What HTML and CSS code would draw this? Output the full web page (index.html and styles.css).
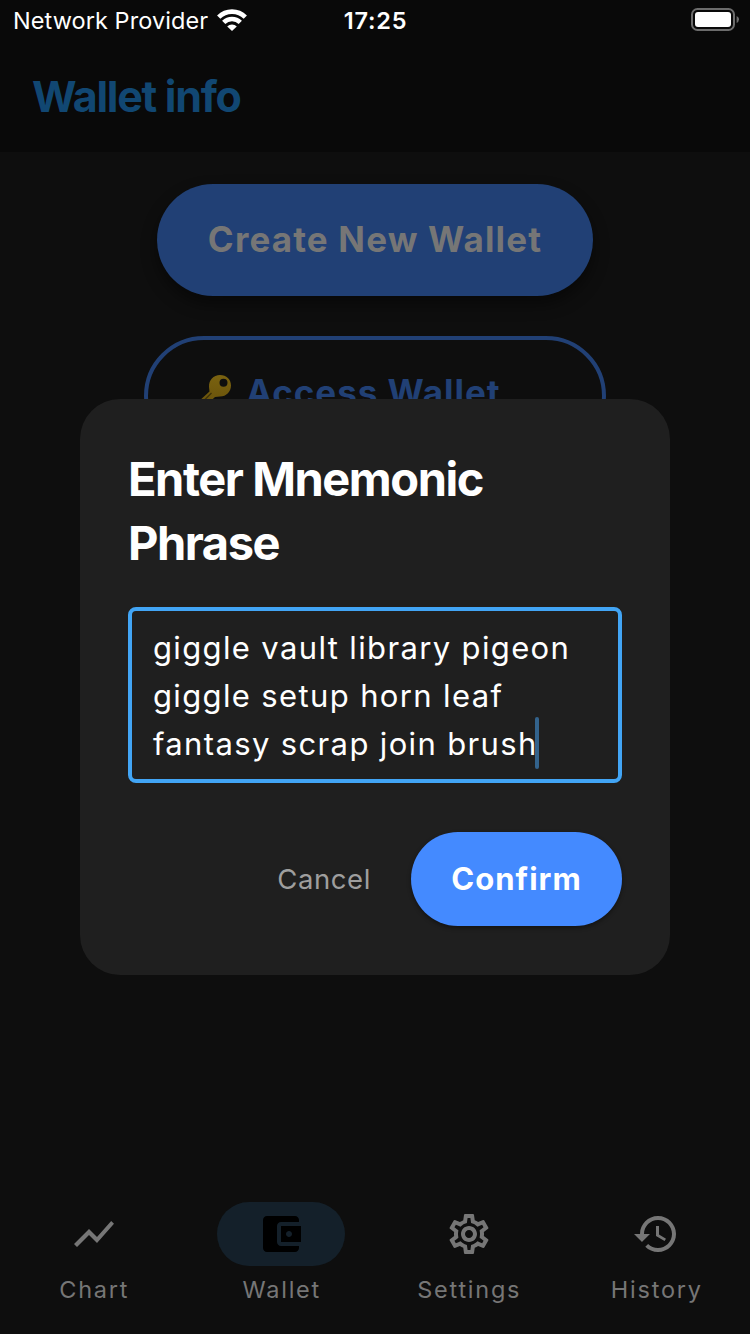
FILE: index.html
```html
<!DOCTYPE html>
<html lang="en">
<head>
<meta charset="utf-8">
<title>Wallet info</title>
<link rel="stylesheet" href="styles.css">
</head>
<body>
<div class="screen">
  <header class="header">
    <div class="status">
      <div class="carrier">
        <span class="carrier-name">Network Provider</span>
        <svg class="wifi" width="30" height="22" viewBox="0 0 30 22">
          <g fill="none" stroke="#fff" stroke-width="4.6">
            <path d="M1.700 8.100A18.800 18.800 0 0 1 28.300 8.100"/>
            <path d="M6.700 13.400A11.800 11.800 0 0 1 23.300 13.400"/>
          </g>
          <path fill="#fff" d="M15 22L10.200 17.500A6.800 6.800 0 0 1 19.800 17.500Z"/>
        </svg>
      </div>
      <span class="time">17:25</span>
      <svg class="battery" width="48" height="23" viewBox="0 0 48 23">
        <rect x="1" y="1" width="42" height="21" rx="5.5" fill="none" stroke="#6c6c6c" stroke-width="2"/>
        <rect x="4" y="4" width="36" height="15" rx="3" fill="#fff"/>
        <path d="M45.600 8Q48.200 9 48 11.500T45.600 15Z" fill="#6c6c6c"/>
      </svg>
    </div>
    <h1 class="title">Wallet info</h1>
  </header>

  <main class="content">
    <button class="create">Create New Wallet</button>
    <button class="access">
      <svg class="key" width="34" height="36" viewBox="0 0 34 36">
        <defs>
          <linearGradient id="gold" x1="0" y1="0" x2="0" y2="1">
            <stop offset="0" stop-color="#7a6210"/>
            <stop offset="1" stop-color="#66500a"/>
          </linearGradient>
        </defs>
        <path fill="url(#gold)" fill-rule="evenodd" d="M22 1C28.500 1 33 5.500 33 11.500S28.500 22.500 22 22.500L17 23L4 35L0 35V28L11.500 17.500L11 13C10.500 6 15.500 1 22 1ZM25.500 4.700A4 4 0 1 0 25.500 12.700A4 4 0 1 0 25.500 4.700Z"/>
        <path d="M13.500 19L1.500 31" stroke="#3c3009" stroke-width="1.200"/>
      </svg>
      <span class="access-label">Access Wallet</span>
    </button>
  </main>

  <nav class="nav">
    <div class="tab">
      <span class="pill"><svg width="48" height="48" viewBox="0 0 24 24"><path d="M3.500 18.490l6-6.010 4 4L22 6.920l-1.410-1.410-7.090 7.970-4-4L2 16.990z"/></svg></span>
      <span class="tab-label">Chart</span>
    </div>
    <div class="tab tab-active">
      <span class="pill"><svg width="48" height="48" viewBox="0 0 24 24"><path d="M21 18v1c0 1.100-.9 2-2 2H5c-1.110 0-2-.9-2-2V5c0-1.100.89-2 2-2h14c1.100 0 2 .9 2 2v1h-9c-1.110 0-2 .9-2 2v8c0 1.100.89 2 2 2h9zm-9-2h10V8H12v8zm4-2.500c-.83 0-1.500-.67-1.500-1.500s.67-1.500 1.500-1.500 1.500.67 1.500 1.500-.67 1.500-1.500 1.500z"/></svg></span>
      <span class="tab-label">Wallet</span>
    </div>
    <div class="tab">
      <span class="pill"><svg width="48" height="48" viewBox="0 0 24 24"><path d="M19.430 12.980c.04-.32.07-.64.07-.98 0-.34-.03-.66-.07-.98l2.110-1.650c.19-.15.24-.42.12-.64l-2-3.460c-.09-.16-.26-.25-.44-.25-.06 0-.12.01-.17.03l-2.490 1c-.52-.4-1.080-.73-1.690-.98l-.38-2.650C14.460 2.180 14.250 2 14 2h-4c-.25 0-.46.18-.49.42l-.38 2.650c-.61.25-1.170.59-1.690.98l-2.490-1c-.06-.02-.12-.03-.18-.03-.17 0-.34.09-.43.25l-2 3.460c-.13.22-.07.49.12.64l2.110 1.650c-.04.32-.07.65-.07.98 0 .33.03.66.07.98l-2.110 1.650c-.19.15-.24.42-.12.64l2 3.460c.09.16.26.25.44.25.06 0 .12-.01.17-.03l2.490-1c.52.4 1.080.73 1.690.98l.38 2.650c.03.24.24.42.49.42h4c.25 0 .46-.18.49-.42l.38-2.650c.61-.25 1.170-.59 1.690-.98l2.490 1c.06.02.12.03.18.03.17 0 .34-.09.43-.25l2-3.460c.12-.22.07-.49-.12-.64l-2.110-1.650zm-1.980-1.710c.04.31.05.52.05.73 0 .21-.02.43-.05.73l-.14 1.130.89.7 1.080.84-.7 1.210-1.270-.51-1.040-.42-.9.68c-.43.32-.84.56-1.250.73l-1.060.43-.16 1.130-.2 1.350h-1.400l-.19-1.350-.16-1.130-1.060-.43c-.43-.18-.83-.41-1.230-.71l-.91-.7-1.060.43-1.270.51-.7-1.210 1.080-.84.89-.7-.14-1.130c-.03-.31-.05-.54-.05-.74s.02-.43.05-.73l.14-1.130-.89-.7-1.080-.84.7-1.210 1.270.51 1.040.42.9-.68c.43-.32.84-.56 1.250-.73l1.060-.43.16-1.130.2-1.350h1.390l.19 1.350.16 1.130 1.060.43c.43.18.83.41 1.230.71l.91.7 1.060-.43 1.270-.51.7 1.210-1.070.85-.89.7.14 1.130zM12 8c-2.210 0-4 1.790-4 4s1.790 4 4 4 4-1.790 4-4-1.790-4-4-4zm0 6c-1.100 0-2-.9-2-2s.9-2 2-2 2 .9 2 2-.9 2-2 2z"/></svg></span>
      <span class="tab-label">Settings</span>
    </div>
    <div class="tab">
      <span class="pill"><svg width="48" height="48" viewBox="0 0 24 24"><path d="M13 3c-4.970 0-9 4.030-9 9H1l3.890 3.890.07.14L9 12H6c0-3.870 3.130-7 7-7s7 3.130 7 7-3.130 7-7 7c-1.930 0-3.680-.79-4.940-2.060l-1.420 1.420C8.270 19.990 10.510 21 13 21c4.970 0 9-4.030 9-9s-4.030-9-9-9zm-1 5v5l4.280 2.540.72-1.210-3.500-2.080V8H12z"/></svg></span>
      <span class="tab-label">History</span>
    </div>
  </nav>

  <section class="dialog">
    <h2 class="dialog-title">Enter Mnemonic<br>Phrase</h2>
    <div class="field"><span class="line">giggle vault library pigeon</span><span class="line">giggle setup horn leaf</span><span class="line">fantasy scrap join brush<i class="caret"></i></span></div>
    <div class="actions">
      <button class="cancel">Cancel</button>
      <button class="confirm">Confirm</button>
    </div>
  </section>
</div>
</body>
</html>
```
FILE: styles.css
```css
* { box-sizing: border-box; }
body { margin: 0; background: #0e0e0e; font-family: Inter, "Liberation Sans", sans-serif; }
button { border: 0; padding: 0; background: none; font: inherit; white-space: nowrap; }
svg { display: block; flex: none; }

.screen { position: relative; display: flex; flex-direction: column; width: 750px; height: 1334px; overflow: hidden; background: #0e0e0e; }

.header { height: 152px; background: #090909; }
.status { display: grid; grid-template-columns: 1fr auto 1fr; height: 40px; padding: 0 12px 0 13px; align-items: center; color: #fff; }
.carrier { display: flex; align-items: center; gap: 9px; }
.carrier-name { font-size: 23.5px; letter-spacing: 0.07px; white-space: nowrap; }
.time { font-size: 23.5px; font-weight: 600; letter-spacing: 0.8px; }
.battery { justify-self: end; margin: 0 -1px 2px 0; }
.title { margin: 0; padding-left: 32px; font-size: 43px; line-height: 112px; font-weight: 700; letter-spacing: -1.3px; color: #114772; }

.content { flex: 1; display: flex; flex-direction: column; align-items: center; gap: 40px; padding-top: 32px; }
.create { width: 436px; height: 112px; padding-bottom: 2px; border-radius: 56px; background: #214075; color: #767676; font-size: 35px; font-weight: 700; letter-spacing: 1.15px; box-shadow: 0 8px 16px rgba(0, 0, 0, .45); }
.access { display: flex; align-items: flex-start; gap: 14px; width: 462px; height: 120px; padding: 34px 0 0 50px; border: 4px solid #214075; border-radius: 60px; color: #214075; }
.access-label { font-size: 35px; line-height: 36px; font-weight: 700; letter-spacing: 0.95px; }

.nav { display: grid; grid-template-columns: repeat(4, 1fr); height: 132px; color: #767676; }
.tab { display: flex; flex-direction: column; align-items: center; gap: 8px; }
.pill { display: grid; place-items: center; width: 128px; height: 64px; border-radius: 32px; fill: #767676; }
.tab-active .pill { background: #14202a; fill: #000; }
.tab-label { padding-left: 1px; font-size: 23.5px; line-height: 32px; letter-spacing: 1.75px; }

.dialog { position: absolute; left: 80px; top: 399px; width: 590px; height: 576px; padding: 48px; border-radius: 40px; background: #1f1f1f; color: #fff; }
.dialog-title { margin: 0; font-size: 47px; line-height: 64px; font-weight: 700; letter-spacing: -1.45px; }
.field { display: flex; flex-direction: column; align-items: flex-start; height: 176px; margin-top: 32px; padding: 13px 20px 13px 21px; border: 4px solid #42a5f5; border-radius: 8px; font-size: 31px; line-height: 48px; letter-spacing: 1.36px; white-space: nowrap; }
.line { position: relative; }
.caret { position: absolute; right: -1px; top: -3px; width: 4px; height: 52px; border-radius: 2px; background: #33638c; }
.actions { display: flex; justify-content: flex-end; align-items: center; gap: 40px; margin-top: 49px; }
.cancel { color: #9e9e9e; font-size: 27.5px; letter-spacing: 0.6px; }
.confirm { width: 211px; height: 94px; padding-bottom: 2px; border-radius: 47px; background: #448aff; color: #fff; font-size: 31px; font-weight: 700; letter-spacing: 1px; box-shadow: 0 2px 4px rgba(0, 0, 0, .4); }
```
